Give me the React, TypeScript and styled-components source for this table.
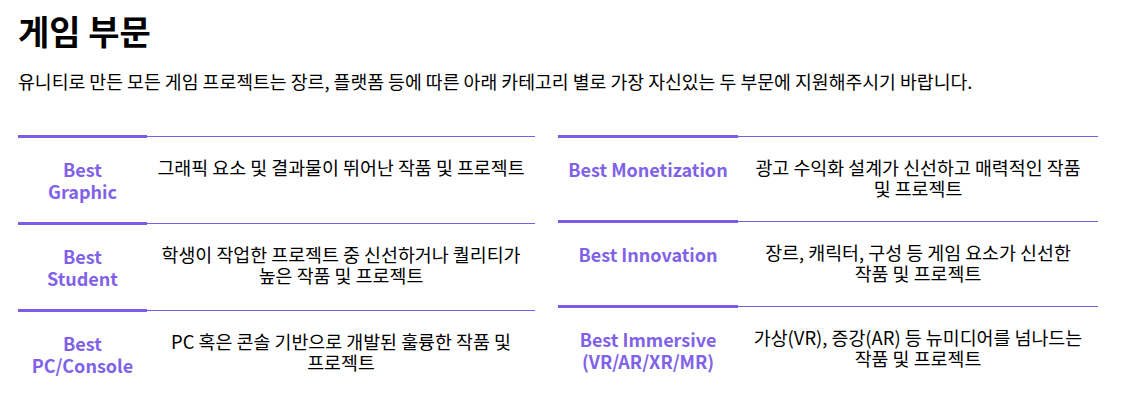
import React from "react";
import { styled, createGlobalStyle } from "styled-components";

type Category = {
  label: string[];
  desc: string;
};

const leftItems: Category[] = [
  { label: ["Best", "Graphic"], desc: "그래픽 요소 및 결과물이 뛰어난 작품 및 프로젝트" },
  { label: ["Best", "Student"], desc: "학생이 작업한 프로젝트 중 신선하거나 퀄리티가 높은 작품 및 프로젝트" },
  { label: ["Best", "PC/Console"], desc: "PC 혹은 콘솔 기반으로 개발된 훌륭한 작품 및 프로젝트" },
];

const rightItems: Category[] = [
  { label: ["Best Monetization"], desc: "광고 수익화 설계가 신선하고 매력적인 작품 및 프로젝트" },
  { label: ["Best Innovation"], desc: "장르, 캐릭터, 구성 등 게임 요소가 신선한 작품 및 프로젝트" },
  { label: ["Best Immersive", "(VR/AR/XR/MR)"], desc: "가상(VR), 증강(AR) 등 뉴미디어를 넘나드는 작품 및 프로젝트" },
];

const CategoryTable = ({ items, width, labelWidth }: { items: Category[]; width: number; labelWidth: number }) => (
  <Table $width={width}>
    <colgroup>
      <col style={{ width: labelWidth }} />
      <col />
    </colgroup>
    <tbody>
      {items.map((item) => (
        <tr key={item.desc}>
          <LabelCell>
            {item.label.map((line) => (
              <div key={line}>{line}</div>
            ))}
          </LabelCell>
          <DescCell>{item.desc}</DescCell>
        </tr>
      ))}
    </tbody>
  </Table>
);

const App = () => {
  return (
    <>
      <GlobalStyle />
      <Section>
        <Title>게임 부문</Title>
        <Lead>
          유니티로 만든 모든 게임 프로젝트는 장르, 플랫폼 등에 따른 아래 카테고리 별로 가장 자신있는 두 부문에 지원해주시기 바랍니다.
        </Lead>
        <Columns>
          <CategoryTable items={leftItems} width={517} labelWidth={129} />
          <CategoryTable items={rightItems} width={540} labelWidth={180} />
        </Columns>
      </Section>
    </>
  );
};

export default App;

const GlobalStyle = createGlobalStyle`
  body {
    margin: 0;
    background: #ffffff;
    font-family: "Noto Sans CJK KR", "Noto Sans", sans-serif;
    color: #000000;
    word-break: keep-all;
  }
`;

const Section = styled.section`
  padding: 0 18px;
`;

const Title = styled.h2`
  margin: 11px 0 0;
  font-size: 34px;
  line-height: 40px;
  font-weight: 700;
`;

const Lead = styled.p`
  margin: 18px 0 0;
  font-size: 18.3px;
  line-height: 24px;
`;

const Columns = styled.div`
  display: flex;
  gap: 23px;
  margin-top: 42px;
  align-items: flex-start;
`;

const Table = styled.table<{ $width: number }>`
  width: ${(p) => p.$width}px;
  border-collapse: collapse;
  table-layout: fixed;
`;

const LabelCell = styled.th`
  border-top: 3px solid #7b5ce6;
  padding: 20px 0;
  vertical-align: top;
  text-align: center;
  font-size: 18px;
  line-height: 22px;
  font-weight: 700;
  color: #7f62e8;
`;

const DescCell = styled.td`
  border-top: 1px solid #7b5ce6;
  padding: 20px 10px 22px;
  vertical-align: top;
  text-align: center;
  font-size: 18.4px;
  line-height: 21px;
`;
